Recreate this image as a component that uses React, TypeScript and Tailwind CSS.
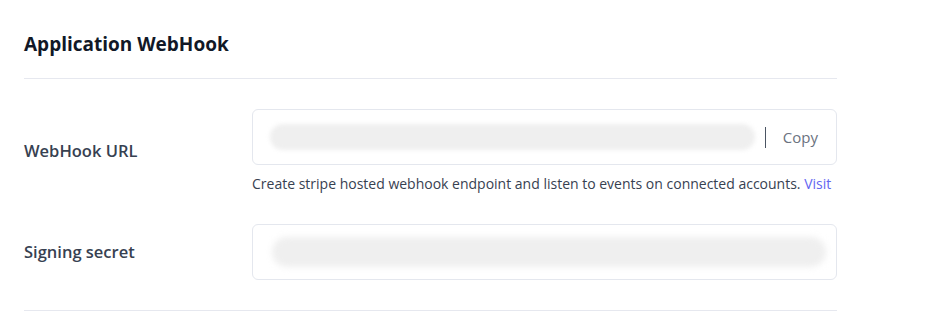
export default function App() {
  return (
    <div
      className="min-h-[330px] w-[936px] bg-white px-6"
      style={{ fontFamily: '"Open Sans", "Noto Sans", sans-serif' }}
    >
      <div className="w-[813px]">
        <div className="flex h-[79px] items-center border-b border-[#e6e8ef] pt-[9px]">
          <h2 className="text-[19px] font-bold leading-6 text-[#111827]">Application WebHook</h2>
        </div>

        <div className="flex items-center pt-[30px]">
          <div className="w-[228px] text-[16.5px] font-semibold leading-6 text-[#374151]">WebHook URL</div>
          <div className="flex-1">
            <div className="flex h-[56px] items-center rounded-md border border-[#e4e7ee] pl-[17px] pr-[18px]">
              <div className="h-[26px] flex-1 rounded-full bg-[#efefef] blur-[2px]" />
              <div className="ml-[10px] h-[21px] w-px bg-[#4b5563]" />
              <button className="ml-[17px] text-[15px] text-[#6b7280]">Copy</button>
            </div>
            <p className="mt-[10px] text-[14px] leading-[18px] text-[#374151]">
              Create stripe hosted webhook endpoint and listen to events on connected accounts.{' '}
              <a className="text-[#6366f1]">Visit</a>
            </p>
          </div>
        </div>

        <div className="flex items-center border-b border-[#e6e8ef] pb-[30px] pt-[31px]">
          <div className="w-[228px] text-[16.5px] font-semibold leading-6 text-[#374151]">Signing secret</div>
          <div className="flex h-[56px] flex-1 items-center rounded-md border border-[#e4e7ee] pl-[19px] pr-[10px]">
            <div className="h-[30px] flex-1 rounded-full bg-[#efefef] blur-[3px]" />
          </div>
        </div>
      </div>
    </div>
  );
}
